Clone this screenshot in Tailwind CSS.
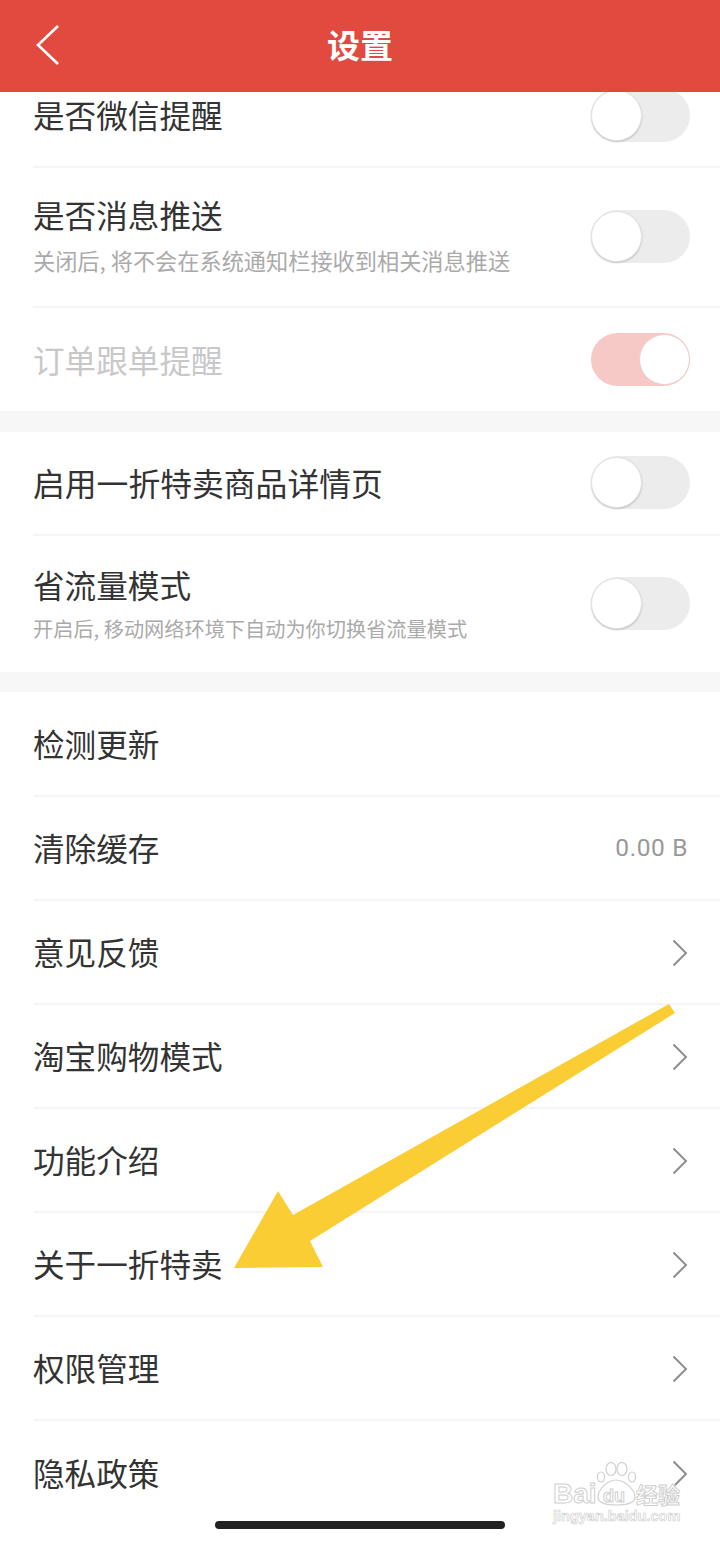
<!DOCTYPE html>
<html lang="zh">
<head>
  <meta charset="UTF-8">
  <meta name="viewport" content="width=device-width, initial-scale=1.0">
  <title>设置</title>
  <script src="https://cdn.jsdelivr.net/npm/@tailwindcss/browser@4"></script>
</head>
<body class="bg-white font-['Noto_Sans_CJK_SC','Noto_Sans',sans-serif] text-[#333]">
  <div class="relative w-[720px] h-[1541px] overflow-hidden bg-white">
    <!-- header -->
    <header class="relative z-10 flex items-center justify-center h-[92px] bg-[#e2493f] text-white">
      <svg class="absolute left-[35px] top-[24px]" width="26" height="42" viewBox="0 0 26 42" fill="none">
        <path d="M23 2 L3 21 L23 40" stroke="#fff" stroke-width="2.6"/>
      </svg>
      <h1 class="text-[33px] font-bold leading-none -mt-[4px]">设置</h1>
    </header>

    <main class="h-[1449px] overflow-hidden">
      <!-- first group, scrolled under the header -->
      <div class="-mt-[28px] flex items-center justify-between h-[104px] ml-[33px] pr-[30px] border-b-2 border-[#f5f5f5]">
        <p class="text-[31.6px] leading-none">是否微信提醒</p>
        <div class="relative w-[99px] h-[53px] rounded-full bg-[#ececec]">
          <span class="absolute left-0 top-[1px] w-[51px] h-[51px] rounded-full bg-white border border-[#e2e2e2] shadow-[0_1px_2px_rgba(0,0,0,0.2)]"></span>
        </div>
      </div>
      <div class="flex items-center justify-between h-[140px] ml-[33px] pr-[30px] border-b-2 border-[#f5f5f5]">
        <div class="flex flex-col gap-[18px] -mt-[4px]">
          <p class="text-[31.6px] leading-none">是否消息推送</p>
          <p class="text-[22.2px] leading-none text-[#aaa]">关闭后, 将不会在系统通知栏接收到相关消息推送</p>
        </div>
        <div class="relative w-[99px] h-[53px] rounded-full bg-[#ececec] -mt-[2px]">
          <span class="absolute left-0 top-[1px] w-[51px] h-[51px] rounded-full bg-white border border-[#e2e2e2] shadow-[0_1px_2px_rgba(0,0,0,0.2)]"></span>
        </div>
      </div>
      <div class="flex items-center justify-between h-[103px] ml-[33px] pr-[30px]">
        <p class="text-[31.6px] leading-none text-[#c8c8c8]">订单跟单提醒</p>
        <div class="relative w-[99px] h-[53px] rounded-full bg-[#f6c9c6]">
          <span class="absolute right-0 top-[1px] w-[51px] h-[51px] rounded-full bg-white border border-[#eccfcd]"></span>
        </div>
      </div>

      <div class="h-[21px] bg-[#f7f7f7]"></div>

      <!-- second group -->
      <div class="flex items-center justify-between h-[104px] ml-[33px] pr-[30px] border-b-2 border-[#f5f5f5]">
        <p class="text-[31.8px] leading-none">启用一折特卖商品详情页</p>
        <div class="relative w-[99px] h-[53px] rounded-full bg-[#ececec] -mt-[1px]">
          <span class="absolute left-0 top-[1px] w-[51px] h-[51px] rounded-full bg-white border border-[#e2e2e2] shadow-[0_1px_2px_rgba(0,0,0,0.2)]"></span>
        </div>
      </div>
      <div class="flex items-center justify-between h-[136px] ml-[33px] pr-[30px]">
        <div class="flex flex-col gap-[18px]">
          <p class="text-[31.6px] leading-none">省流量模式</p>
          <p class="text-[20.2px] leading-none text-[#aaa]">开启后, 移动网络环境下自动为你切换省流量模式</p>
        </div>
        <div class="relative w-[99px] h-[53px] rounded-full bg-[#ececec] -mt-[1px]">
          <span class="absolute left-0 top-[1px] w-[51px] h-[51px] rounded-full bg-white border border-[#e2e2e2] shadow-[0_1px_2px_rgba(0,0,0,0.2)]"></span>
        </div>
      </div>

      <div class="h-[20px] bg-[#f7f7f7]"></div>

      <!-- third group -->
      <div class="flex items-center justify-between h-[105px] ml-[33px] pr-[32px] border-b-2 border-[#f5f5f5]">
        <p class="text-[31.6px] leading-none">检测更新</p>
      </div>
      <div class="flex items-center justify-between h-[104px] pt-px ml-[33px] pr-[32px] border-b-2 border-[#f5f5f5]">
        <p class="text-[31.6px] leading-none -mt-[2px]">清除缓存</p>
        <span class="font-['Roboto',sans-serif] text-[24.5px] leading-none tracking-[0.6px] text-[#999]">0.00 B</span>
      </div>
      <div class="flex items-center justify-between h-[104px] pt-px ml-[33px] pr-[32px] border-b-2 border-[#f5f5f5]">
        <p class="text-[31.6px] leading-none -mt-[2px]">意见反馈</p>
        <svg width="16" height="28" viewBox="0 0 16 28" fill="none"><path d="M1.5 1.5 L14 14 L1.5 26.5" stroke="#8e8e8e" stroke-width="2"/></svg>
      </div>
      <div class="flex items-center justify-between h-[104px] pt-px ml-[33px] pr-[32px] border-b-2 border-[#f5f5f5]">
        <p class="text-[31.6px] leading-none -mt-[2px]">淘宝购物模式</p>
        <svg width="16" height="28" viewBox="0 0 16 28" fill="none"><path d="M1.5 1.5 L14 14 L1.5 26.5" stroke="#8e8e8e" stroke-width="2"/></svg>
      </div>
      <div class="flex items-center justify-between h-[104px] pt-px ml-[33px] pr-[32px] border-b-2 border-[#f5f5f5]">
        <p class="text-[31.6px] leading-none -mt-[2px]">功能介绍</p>
        <svg width="16" height="28" viewBox="0 0 16 28" fill="none"><path d="M1.5 1.5 L14 14 L1.5 26.5" stroke="#8e8e8e" stroke-width="2"/></svg>
      </div>
      <div class="flex items-center justify-between h-[104px] pt-px ml-[33px] pr-[32px] border-b-2 border-[#f5f5f5]">
        <p class="text-[31.6px] leading-none -mt-[2px]">关于一折特卖</p>
        <svg width="16" height="28" viewBox="0 0 16 28" fill="none"><path d="M1.5 1.5 L14 14 L1.5 26.5" stroke="#8e8e8e" stroke-width="2"/></svg>
      </div>
      <div class="flex items-center justify-between h-[104px] pt-px ml-[33px] pr-[32px] border-b-2 border-[#f5f5f5]">
        <p class="text-[31.6px] leading-none -mt-[2px]">权限管理</p>
        <svg width="16" height="28" viewBox="0 0 16 28" fill="none"><path d="M1.5 1.5 L14 14 L1.5 26.5" stroke="#8e8e8e" stroke-width="2"/></svg>
      </div>
      <div class="flex items-center justify-between h-[104px] pt-px ml-[33px] pr-[32px]">
        <p class="text-[31.6px] leading-none -mt-[2px]">隐私政策</p>
        <svg width="16" height="28" viewBox="0 0 16 28" fill="none"><path d="M1.5 1.5 L14 14 L1.5 26.5" stroke="#8e8e8e" stroke-width="2"/></svg>
      </div>
    </main>

    <!-- yellow annotation arrow -->
    <svg class="absolute left-0 top-0 pointer-events-none" width="720" height="1541" viewBox="0 0 720 1541">
      <polygon points="669,1004 675,1013 310,1241 323,1267 234,1268 278,1191 293,1215" fill="#fbcd35"/>
    </svg>

    <!-- home indicator -->
    <div class="absolute left-[215px] top-[1521px] w-[290px] h-[8px] rounded-full bg-[#222]"></div>

    <!-- watermark -->
    <div class="absolute left-[552px] top-[1462px] w-[132px] h-[64px] text-white">
      <svg class="absolute left-[43px] top-0" width="44" height="44" viewBox="0 0 44 44" fill="#fff" fill-opacity="0.7" stroke="#cfcfcf" stroke-width="1.2">
        <ellipse cx="6" cy="15" rx="3.5" ry="5"/>
        <ellipse cx="16" cy="7" rx="5" ry="6.5"/>
        <ellipse cx="27" cy="7" rx="5" ry="6.5"/>
        <ellipse cx="37" cy="15" rx="3.5" ry="5"/>
        <path d="M21 18 C12 18 3 28 3 35 C3 42 12 43 21 43 C30 43 40 42 40 35 C40 28 30 18 21 18 Z"/>
      </svg>
      <span class="absolute left-[1px] top-[18px] font-['Liberation_Sans',sans-serif] font-bold text-[28px] leading-none [-webkit-text-stroke:1px_#cfcfcf]">Bai</span>
      <span class="absolute left-[51px] top-[25px] font-['Liberation_Sans',sans-serif] font-bold text-[18px] leading-none [-webkit-text-stroke:1px_#cfcfcf]">du</span>
      <span class="absolute left-[84px] top-[20px] font-bold text-[22px] leading-none [-webkit-text-stroke:1px_#cfcfcf]">经验</span>
      <span class="absolute left-[1px] top-[47px] font-['Liberation_Sans',sans-serif] font-bold text-[14.5px] leading-none [-webkit-text-stroke:0.7px_#cfcfcf]">jingyan.baidu.com</span>
    </div>
  </div>
</body>
</html>
